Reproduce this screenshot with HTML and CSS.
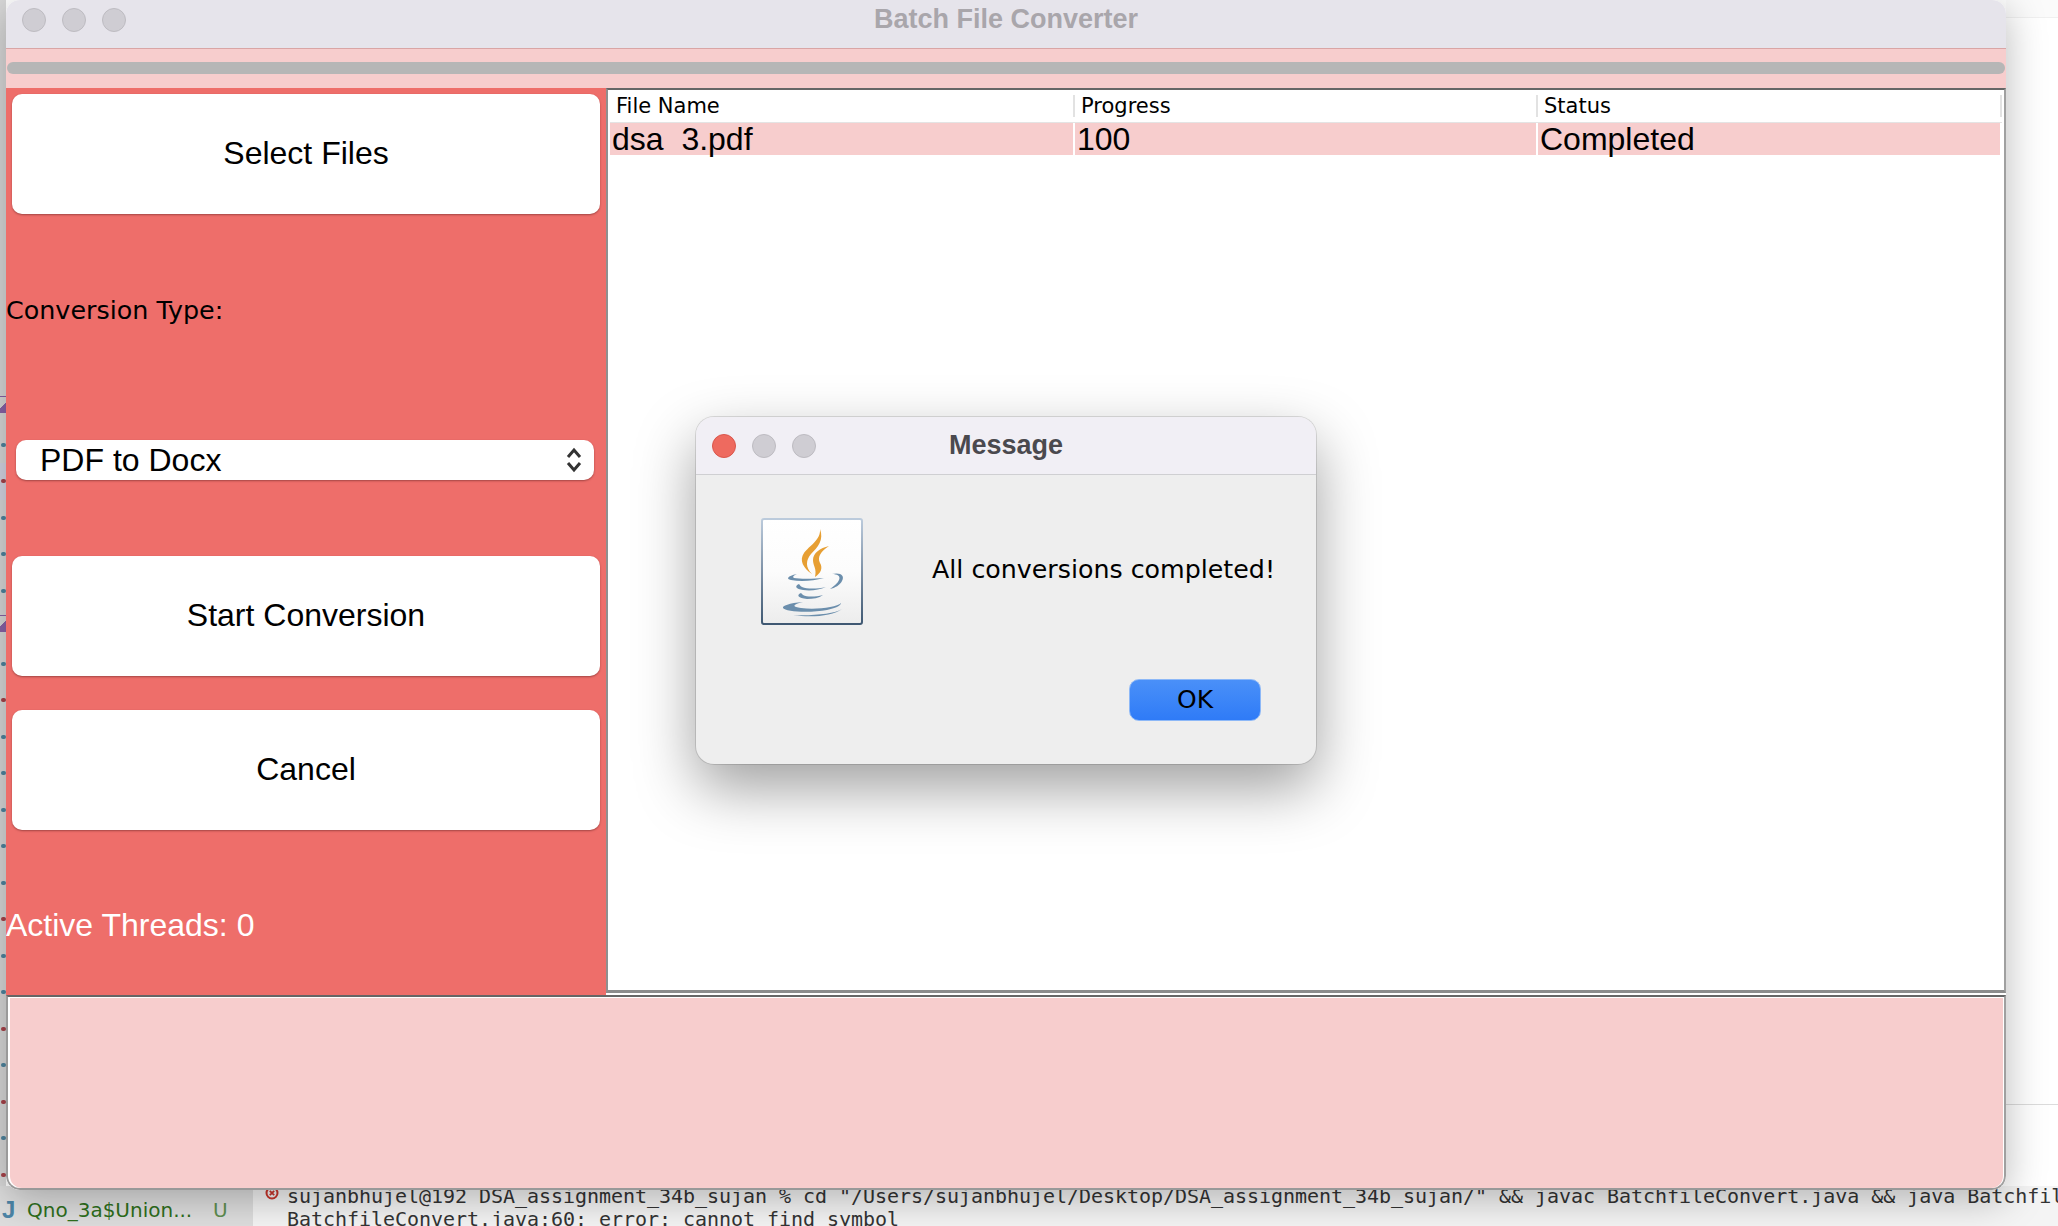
FILE: index.html
```html
<!DOCTYPE html>
<html lang="en">
<head>
  <meta charset="UTF-8">
  <title>Batch File Converter</title>
  <link rel="stylesheet" href="styles.css">
</head>
<body>
  <!-- IDE behind the window -->
  <div class="gutter">
    <span class="mark purple"></span>
    <span class="mark blue"></span>
    <span class="mark red active"></span>
    <span class="mark blue"></span>
    <span class="mark blue"></span>
    <span class="mark blue"></span>
    <span class="mark purple"></span>
    <span class="mark blue"></span>
    <span class="mark red"></span>
    <span class="mark blue"></span>
    <span class="mark blue"></span>
    <span class="mark blue"></span>
    <span class="mark blue"></span>
    <span class="mark blue"></span>
    <span class="mark red"></span>
    <span class="mark blue"></span>
    <span class="mark blue"></span>
    <span class="mark red"></span>
    <span class="mark blue"></span>
    <span class="mark red"></span>
    <span class="mark blue"></span>
    <span class="mark red"></span>
  </div>
  <div class="top-strip"></div>
  <div class="side-line"></div>
  <div class="ide-bottom">
    <div class="file-list">
      <span class="file-icon">J</span>
      <span class="file-name">Qno_3a$Union...</span>
      <span class="file-state">U</span>
    </div>
    <div class="terminal">
      <svg class="error-icon" width="14" height="14" viewBox="0 0 14 14">
        <circle cx="7" cy="7" r="5.5" fill="none" stroke="#c9352b" stroke-width="2"/>
        <path d="M4.8 4.8l4.4 4.4M9.2 4.8l-4.4 4.4" stroke="#c9352b" stroke-width="1.8"/>
      </svg>
      <div class="terminal-lines">
        <div>sujanbhujel@192 DSA_assignment_34b_sujan % cd "/Users/sujanbhujel/Desktop/DSA_assignment_34b_sujan/" &amp;&amp; javac BatchfileConvert.java &amp;&amp; java BatchfileConvert</div>
        <div>BatchfileConvert.java:60: error: cannot find symbol</div>
      </div>
    </div>
  </div>

  <!-- Main window -->
  <div class="window">
    <div class="titlebar">
      <div class="lights">
        <span class="light"></span>
        <span class="light"></span>
        <span class="light"></span>
      </div>
      <span class="window-title">Batch File Converter</span>
    </div>

    <div class="progress-strip">
      <div class="progress-bar"></div>
    </div>

    <div class="main-row">
      <div class="controls">
        <button class="big-btn first-btn">Select Files</button>
        <div class="type-label">Conversion Type:</div>
        <div class="combo">
          <span>PDF to Docx</span>
          <svg width="18" height="28" viewBox="0 0 18 28" fill="none" stroke="#333" stroke-width="3">
            <path d="M3 11L9 4L15 11"/>
            <path d="M3 17L9 24L15 17"/>
          </svg>
        </div>
        <button class="big-btn start-btn">Start Conversion</button>
        <button class="big-btn cancel-btn">Cancel</button>
        <div class="threads">Active Threads: 0</div>
      </div>

      <div class="table-pane">
        <div class="table-head">
          <div class="head-cell">File Name</div>
          <div class="head-cell">Progress</div>
          <div class="head-cell">Status</div>
        </div>
        <div class="table-row">
          <div class="row-cell">dsa&nbsp;&nbsp;3.pdf</div>
          <div class="row-cell">100</div>
          <div class="row-cell">Completed</div>
        </div>
      </div>
    </div>

    <div class="log-pane">
      <div class="log-area"></div>
    </div>
  </div>

  <!-- Message dialog -->
  <div class="dialog">
    <div class="dialog-title">
      <div class="lights dialog-lights">
        <span class="light close"></span>
        <span class="light"></span>
        <span class="light"></span>
      </div>
      <span class="dialog-name">Message</span>
    </div>
    <div class="dialog-body">
      <div class="dialog-content">
        <svg class="java-icon" width="102" height="107" viewBox="0 0 102 107">
          <defs>
            <linearGradient id="paper" x1="0" y1="0" x2="0" y2="1">
              <stop offset="0" stop-color="#ffffff"/>
              <stop offset="0.5" stop-color="#fcfcfc"/>
              <stop offset="1" stop-color="#ececec"/>
            </linearGradient>
            <linearGradient id="edge" x1="0" y1="0" x2="0" y2="1">
              <stop offset="0" stop-color="#bccbdc"/>
              <stop offset="1" stop-color="#3f5872"/>
            </linearGradient>
          </defs>
          <rect x="1" y="1" width="100" height="105" rx="2" fill="url(#paper)" stroke="url(#edge)" stroke-width="2"/>
          <g fill="#e79f33">
            <path d="M59 11C60 22 48 28 43 35C38 42 42 50 51 56C44 49 45 42 50 36C57 29 63 22 59 11Z"/>
            <path d="M68 28C59 30 52 35 52 42C52 48 56 50 54 59C60 55 62 50 59 45C56 39 60 33 68 28Z"/>
          </g>
          <g fill="#6b8eac">
            <path d="M36 56C26 58 25 61 30 62C40 64 52 63 63 60C52 61 38 61 33 60C31 59 33 57 36 56Z"/>
            <path d="M71 56C80 54 84 58 81 63C79 67 74 70 69 71C73 68 77 65 78 62C80 58 76 56 71 56Z"/>
            <path d="M38 66C33 68 35 71 42 72C50 73 58 72 65 69C56 71 46 71 41 69C39 68 39 67 38 66Z"/>
            <path d="M40 75C35 77 37 80 46 81C52 81 58 80 62 77C54 79 46 79 42 77Z"/>
            <path d="M42 84C28 85 21 88 22 90C24 94 50 95 66 92C74 90 80 88 80 85C76 89 56 92 40 90C32 89 30 87 42 84Z"/>
            <path d="M32 97C50 100 72 98 81 91C74 96 50 98 32 97Z"/>
          </g>
        </svg>
        <div class="dialog-text">All conversions completed!</div>
      </div>
      <div class="dialog-actions">
        <button class="ok-btn">OK</button>
      </div>
    </div>
  </div>
</body>
</html>
```

FILE: styles.css
```css
/* Page */
body {
  margin: 0;
  width: 2058px;
  height: 1226px;
  overflow: hidden;
  position: relative;
  background-color: #ffffff;
  font-family: "Liberation Sans", Arial, sans-serif;
  color: #000000;
}

/* IDE behind the window */
.gutter {
  position: absolute;
  left: 0;
  top: 0;
  width: 6px;
  height: 1190px;
  padding-top: 390px;
  box-sizing: border-box;
  background-color: #d9d9d9;
  display: flex;
  flex-direction: column;
}

.mark {
  display: block;
  height: 36.5px;
  flex: none;
  position: relative;
}

.mark.active {
  background-color: #d6d6e4;
}

.mark::after {
  content: "";
  position: absolute;
  left: 1px;
  top: 16px;
  width: 5px;
  height: 4px;
  border-radius: 2px;
}

.mark.blue::after {
  background-color: #4f86a0;
}

.mark.red::after {
  background-color: #a8434a;
}

.mark.purple::after {
  left: 0;
  top: 6px;
  width: 6px;
  height: 16px;
  border-radius: 0;
  background: linear-gradient(135deg, #d9d9d9 50%, #8a63a8 50%);
  border-top: 1px solid #8a63a8;
}

.top-strip {
  position: absolute;
  left: 2006px;
  right: 0;
  top: 0;
  height: 17px;
  background-color: #fbfbfb;
  border-bottom: 1px solid #f0f0f0;
}

.side-line {
  position: absolute;
  left: 2006px;
  right: 0;
  top: 1104px;
  height: 1px;
  background-color: #dcdcdc;
}

.ide-bottom {
  position: absolute;
  left: 0;
  right: 0;
  bottom: 0;
  height: 40px;
  display: flex;
  overflow: hidden;
}

.file-list {
  width: 253px;
  flex: none;
  display: flex;
  align-items: center;
  padding-top: 8px;
  box-sizing: border-box;
  background-color: #dedede;
  font-family: "DejaVu Sans", sans-serif;
  font-size: 20px;
}

.file-icon {
  width: 27px;
  padding-left: 2px;
  box-sizing: border-box;
  color: #4d86a8;
  font-family: "Liberation Sans", sans-serif;
  font-weight: bold;
  font-size: 24px;
}

.file-name {
  width: 186px;
  color: #2e6f1c;
}

.file-state {
  color: #5f8f50;
}

.terminal {
  flex: 1;
  display: flex;
  background-color: #f4f4f4;
  font-family: "DejaVu Sans Mono", monospace;
  font-size: 20px;
  line-height: 23px;
  letter-spacing: -0.04px;
  color: #333333;
  white-space: nowrap;
}

.error-icon {
  margin: 0 0 0 12px;
  flex: none;
}

.terminal-lines {
  margin-left: 8px;
  margin-top: -1px;
}

/* Main window */
.window {
  position: absolute;
  left: 6px;
  top: 0;
  width: 2000px;
  height: 1190px;
  display: flex;
  flex-direction: column;
  overflow: hidden;
  border-radius: 14px;
  background-color: #ffffff;
  box-shadow: 0 8px 40px rgba(0, 0, 0, 0.28);
}

.titlebar {
  height: 48px;
  flex: none;
  position: relative;
  display: flex;
  align-items: center;
  justify-content: center;
  background-color: #e6e4eb;
}

.lights {
  position: absolute;
  left: 16px;
  top: 8px;
  display: flex;
  gap: 16px;
}

.light {
  width: 24px;
  height: 24px;
  box-sizing: border-box;
  border-radius: 50%;
  background-color: #cfcdd3;
  border: 1px solid #bdbbc1;
}

.light.close {
  background-color: #ee6a5f;
  border-color: #d9564c;
}

.window-title {
  font-size: 27px;
  font-weight: bold;
  color: #a9a6ab;
  margin-top: -10px;
}

.progress-strip {
  height: 40px;
  flex: none;
  box-sizing: border-box;
  padding: 13px 1px 0;
  background-color: #f7cdcd;
  border-top: 1px solid #d9a5a5;
}

.progress-bar {
  height: 12px;
  border-radius: 6px;
  background-color: #b6b6b6;
}

.main-row {
  flex: 1;
  display: flex;
  min-height: 0;
}

/* Left panel */
.controls {
  width: 600px;
  flex: none;
  background-color: #ee6e6a;
  padding: 6px 6px 0;
  box-sizing: border-box;
}

.big-btn {
  display: block;
  width: 588px;
  height: 120px;
  padding: 0 0 2px;
  border: none;
  border-radius: 10px;
  background-color: #ffffff;
  font-family: "Liberation Sans", Arial, sans-serif;
  font-size: 32px;
  color: #000000;
  box-shadow: 0 1px 2px rgba(90, 30, 30, 0.5);
}

.type-label {
  margin-left: -6px;
  height: 188px;
  line-height: 192px;
  font-family: "DejaVu Sans", sans-serif;
  font-size: 25.4px;
}

.combo {
  margin: 38px 0 0 4px;
  width: 578px;
  height: 40px;
  box-sizing: border-box;
  padding: 0 11px 0 24px;
  display: flex;
  align-items: center;
  justify-content: space-between;
  background-color: #ffffff;
  border-radius: 10px;
  font-size: 32px;
  box-shadow: 0 1px 2px rgba(90, 30, 30, 0.5);
}

.start-btn {
  margin-top: 76px;
}

.cancel-btn {
  margin-top: 34px;
}

.threads {
  margin: 77px 0 0 -6px;
  font-size: 32px;
  line-height: 36px;
  color: #ffffff;
  white-space: nowrap;
}

/* File table */
.table-pane {
  flex: 1;
  margin-bottom: 2px;
  box-sizing: border-box;
  padding: 0 2px 0 2px;
  background-color: #ffffff;
  border-top: 2px solid #666666;
  border-left: 2px solid #8f8f8f;
  border-right: 2px solid #a0a0a0;
  border-bottom: 3px solid #8c8c8c;
}

.table-head,
.table-row {
  display: grid;
  grid-template-columns: 465px 463px 1fr;
}

.table-head {
  height: 33px;
  box-sizing: border-box;
  padding-top: 5px;
  border-bottom: 1px solid #e4e4e4;
}

.head-cell {
  height: 22px;
  line-height: 22px;
  padding-left: 6px;
  font-family: "DejaVu Sans", sans-serif;
  font-size: 21px;
  border-right: 2px solid #e2e2e2;
}

.table-row {
  height: 31px;
  margin-right: 2px;
}

.row-cell {
  line-height: 32px;
  padding-left: 2px;
  font-size: 32px;
  background-color: #f7cdcd;
  border-right: 2px solid #ffffff;
}

.row-cell:last-child {
  border-right: none;
}

/* Log area */
.log-pane {
  height: 195px;
  flex: none;
  box-sizing: border-box;
  padding: 1px 1px 0 2px;
  background-color: #ffffff;
  border-top: 2px solid #666666;
  border-left: 2px solid #9a9a9a;
  border-right: 2px solid #a0a0a0;
  border-bottom: 2px solid #999999;
  border-radius: 0 0 14px 14px;
}

.log-area {
  height: 100%;
  background-color: #f7cdcd;
  border-radius: 0 0 12px 12px;
}

/* Message dialog */
.dialog {
  position: absolute;
  left: 696px;
  top: 417px;
  width: 620px;
  height: 347px;
  display: flex;
  flex-direction: column;
  overflow: hidden;
  border-radius: 18px;
  background-color: #eeeeee;
  box-shadow: 0 0 0 1px rgba(0, 0, 0, 0.12), 0 24px 60px rgba(0, 0, 0, 0.38);
}

.dialog-title {
  height: 57px;
  flex: none;
  position: relative;
  display: flex;
  align-items: center;
  justify-content: center;
  background-color: #f1eff5;
  border-bottom: 1px solid #cfcfd2;
}

.dialog-lights {
  top: 17px;
}

.dialog-name {
  font-size: 27px;
  font-weight: bold;
  color: #4a494e;
}

.dialog-body {
  flex: 1;
  display: flex;
  flex-direction: column;
  padding: 43px 55px 43px 65px;
}

.dialog-content {
  display: flex;
  flex: 1;
}

.java-icon {
  flex: none;
}

.dialog-text {
  margin: 37px 0 0 69px;
  font-family: "DejaVu Sans", sans-serif;
  font-size: 25.3px;
  line-height: 30px;
  white-space: nowrap;
}

.dialog-actions {
  display: flex;
  justify-content: flex-end;
}

.ok-btn {
  width: 132px;
  height: 42px;
  padding: 0 0 2px;
  border: 1px solid #8db8f7;
  border-radius: 10px;
  background: linear-gradient(#4a90f8, #2f7bf7);
  font-family: "DejaVu Sans", sans-serif;
  font-size: 25px;
  color: #000000;
}
```
